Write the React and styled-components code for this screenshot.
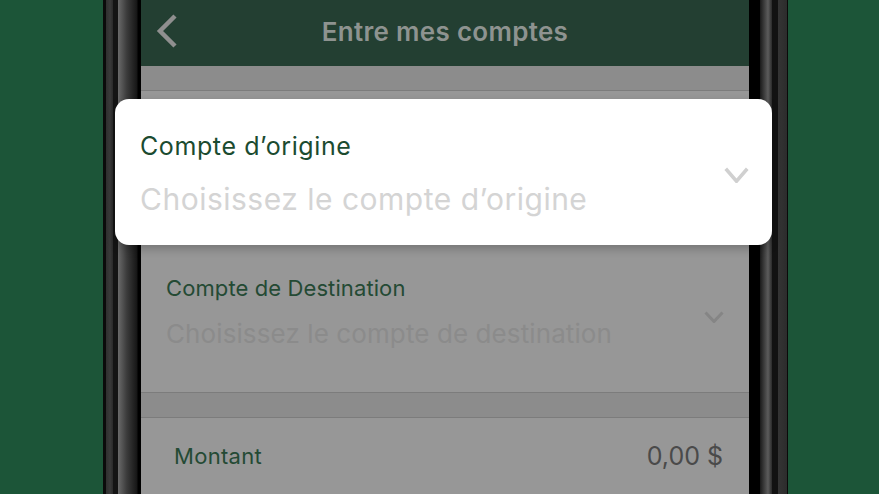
import React from 'react';
import styled, { createGlobalStyle } from 'styled-components';

const GlobalStyle = createGlobalStyle`
  html, body {
    margin: 0;
    padding: 0;
    background: #1c5538;
    overflow: hidden;
    font-family: Inter, "Noto Sans", sans-serif;
  }
`;

const Stage = styled.div`
  height: 494px;
  display: flex;
  padding-left: 103px;
  overflow: hidden;
`;

const Phone = styled.div`
  position: relative;
  width: 685px;
  height: 494px;
  box-sizing: border-box;
  padding: 0 39px 0 38px;
  background: linear-gradient(
    to right,
    #0b0b0b 0px,
    #0b0b0b 3px,
    #2f2f2f 3px,
    #3a3a3a 7px,
    #2a2a2a 10px,
    #141414 10px,
    #141414 15px,
    #6a6a6a 15px,
    #3a3a3a 24px,
    #161616 34px,
    #000 35px,
    #000 657px,
    #1a1a1a 657px,
    #5c5c5c 665px,
    #2a2a2a 669px,
    #121212 669px,
    #121212 675px,
    #343434 675px,
    #2c2c2c 684px,
    #0a0a0a 684px
  );
`;

const Screen = styled.div`
  height: 100%;
  display: flex;
  flex-direction: column;
  background: #979797;
  overflow: hidden;
`;

const Header = styled.header`
  height: 66px;
  flex-shrink: 0;
  display: grid;
  grid-template-columns: 60px 1fr 60px;
  align-items: center;
  background: #233f32;
`;

const BackButton = styled.div`
  display: flex;
  align-items: center;
  padding-left: 15px;
  margin-top: -4px;
`;

const Title = styled.h1`
  margin: -4px 0 0;
  text-align: center;
  font-size: 26px;
  font-weight: 600;
  color: #8e9390;
  letter-spacing: 0.3px;
`;

const Band = styled.div`
  height: ${(p) => p.$h}px;
  flex-shrink: 0;
  background: #8c8c8c;
  border-bottom: 1px solid #7c7c7c;
  border-top: ${(p) => (p.$top ? '1px solid #7c7c7c' : 'none')};
`;

const Field = styled.div`
  display: flex;
  align-items: center;
  padding: ${(p) => p.$pad};
  flex-shrink: 0;
  visibility: ${(p) => (p.$lifted ? 'hidden' : 'visible')};
`;

const FieldText = styled.div`
  flex: 1;
  display: flex;
  flex-direction: column;
  gap: ${(p) => p.$gap}px;
`;

const Label = styled.div`
  font-size: ${(p) => (p.$large ? 25 : 22)}px;
  line-height: 28px;
  color: ${(p) => (p.$large ? '#1b4b30' : '#244a34')};
  letter-spacing: ${(p) => (p.$large ? 0.6 : 0.1)}px;
  white-space: nowrap;
`;

const Placeholder = styled.div`
  font-size: ${(p) => (p.$large ? 30 : 26)}px;
  line-height: ${(p) => (p.$large ? 36 : 32)}px;
  color: ${(p) => (p.$large ? '#d4d4d4' : '#8b8b8b')};
  letter-spacing: ${(p) => (p.$large ? 0.5 : 0.1)}px;
  white-space: nowrap;
`;

const Chevron = styled.svg`
  flex-shrink: 0;
  margin-top: ${(p) => p.$mt || 0}px;
`;

const AmountRow = styled.div`
  display: flex;
  align-items: flex-start;
  justify-content: space-between;
  padding: 24px 26px 0 33px;
`;

const AmountLabel = styled.div`
  font-size: 22px;
  line-height: 28px;
  color: #244a34;
  letter-spacing: 0.3px;
`;

const AmountValue = styled.div`
  font-size: 25px;
  line-height: 30px;
  color: #4a4a4a;
  margin-top: -1px;
`;

const PopupCard = styled.div`
  position: absolute;
  left: 12px;
  top: 99px;
  width: 657px;
  height: 146px;
  box-sizing: border-box;
  border-radius: 14px;
  background: #fff;
  box-shadow: 0 4px 10px rgba(0, 0, 0, 0.22);
  display: flex;
  align-items: center;
  padding: 33px 23px 28px 25px;
`;

const DownArrow = ({ w, h, color, stroke, mt }) => (
  <Chevron width={w} height={h} viewBox={`0 0 ${w} ${h}`} $mt={mt}>
    <path
      d={`M${stroke / 2} ${stroke / 2} L${w / 2} ${h - stroke / 2} L${w - stroke / 2} ${stroke / 2}`}
      fill="none"
      stroke={color}
      strokeWidth={stroke}
    />
  </Chevron>
);

export default function App() {
  return (
    <>
      <GlobalStyle />
      <Stage>
        <Phone>
          <Screen>
            <Header>
              <BackButton>
                <svg width="22" height="34" viewBox="0 0 22 34">
                  <path d="M19 2 L4 17 L19 32" fill="none" stroke="#8f8f8f" strokeWidth="4.5" />
                </svg>
              </BackButton>
              <Title>Entre mes comptes</Title>
              <div />
            </Header>
            <Band $h={24} />
            <Field $pad="22px 25px 63px 25px" $lifted>
              <FieldText $gap={16}>
                <Label>Compte d’origine</Label>
                <Placeholder>Choisissez le compte d’origine</Placeholder>
              </FieldText>
              <DownArrow w={20} h={12} color="#858585" stroke={3} mt={10} />
            </Field>
            <Field $pad="22px 25px 42px 25px">
              <FieldText $gap={16}>
                <Label>Compte de Destination</Label>
                <Placeholder>Choisissez le compte de destination</Placeholder>
              </FieldText>
              <DownArrow w={20} h={12} color="#858585" stroke={3} mt={10} />
            </Field>
            <Band $h={24} $top />
            <AmountRow>
              <AmountLabel>Montant</AmountLabel>
              <AmountValue>0,00 $</AmountValue>
            </AmountRow>
          </Screen>
          <PopupCard>
            <FieldText $gap={21}>
              <Label $large>Compte d’origine</Label>
              <Placeholder $large>Choisissez le compte d’origine</Placeholder>
            </FieldText>
            <DownArrow w={25} h={16} color="#d0d0d0" stroke={3.5} />
          </PopupCard>
        </Phone>
      </Stage>
    </>
  );
}
